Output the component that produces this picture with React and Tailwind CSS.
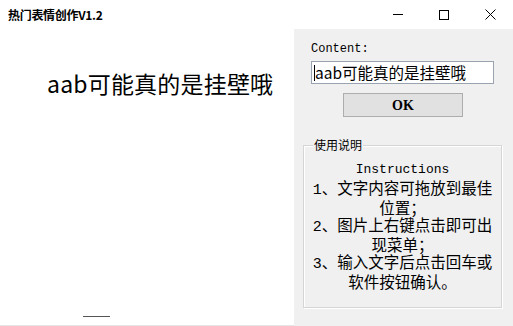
import React from "react";

const cjk = { fontFamily: '"Noto Sans CJK SC", "Noto Sans", sans-serif' };
const mono = { fontFamily: '"Liberation Mono", "Noto Sans CJK SC", monospace' };

const Lat = ({ children, size = "text-[13px]" }) => (
  <span className={size} style={{ fontFamily: '"Liberation Mono", monospace' }}>
    {children}
  </span>
);

const App = () => {
  return (
    <div className="w-[513px] h-[326px] bg-white flex flex-col overflow-hidden text-black" style={cjk}>
      {/* title bar */}
      <div className="h-[29px] flex items-center shrink-0">
        <div className="pl-[8px] text-[12px] font-bold tracking-[-0.3px]">热门表情创作V1.2</div>
        <div className="ml-auto flex items-center h-full">
          <div className="w-[46px] h-full flex items-center justify-center">
            <div className="w-[10px] h-px bg-black" />
          </div>
          <div className="w-[46px] h-full flex items-center justify-center">
            <div className="w-[10px] h-[10px] border border-black" />
          </div>
          <div className="w-[46px] h-full flex items-center justify-center">
            <svg width="11" height="11" viewBox="0 0 11 11">
              <path d="M0.5 0.5 L10.5 10.5 M10.5 0.5 L0.5 10.5" stroke="black" strokeWidth="1" />
            </svg>
          </div>
        </div>
      </div>

      <div className="flex flex-1">
        {/* canvas */}
        <div className="w-[294px] flex flex-col border-b border-[#e4e4e4]">
          <div className="pl-[47px] pt-[39px] text-[23px] leading-[30px] tracking-[0.2px]">aab可能真的是挂壁哦</div>
          <div className="mt-auto mb-[8px] ml-[83px] w-[27px] h-px bg-[#555]" />
        </div>

        {/* side panel */}
        <div className="flex-1 bg-[#f0f0f0] pl-[9px] flex flex-col">
          <div className="ml-[8px] mt-[12px] text-[12px] leading-[16px]" style={mono}>Content:</div>
          <div className="ml-[8px] mt-[4px] w-[183px] h-[23px] bg-white border border-[#9aa3b0] flex items-center pl-[2px]">
            <div className="w-px h-[16px] bg-black" />
            <span className="text-[15.5px] leading-none">aab可能真的是挂壁哦</span>
          </div>
          <div className="ml-[40px] mt-[9px] w-[120px] h-[24px] bg-[#e1e1e1] border border-[#adadad] flex items-center justify-center">
            <span className="text-[14px] font-bold" style={{ fontFamily: '"Liberation Serif", serif' }}>OK</span>
          </div>

          <div className="relative mt-[28px] w-[199px] h-[163px] border border-[#d5d5d5] shadow-[inset_1px_1px_0_#ffffff,1px_1px_0_#ffffff]">
            <div className="absolute left-[9px] top-[-9px] px-px bg-[#f0f0f0] text-[12px] leading-[16px]">使用说明</div>
            <div className="pt-[12px] text-center text-[15.5px] leading-[16.5px]">
              <div><Lat>Instructions</Lat></div>
              <div><Lat size="text-[15px]">1</Lat>、文字内容可拖放到最佳</div>
              <div>位置；</div>
              <div><Lat size="text-[15px]">2</Lat>、图片上右键点击即可出</div>
              <div>现菜单；</div>
              <div><Lat size="text-[15px]">3</Lat>、输入文字后点击回车或</div>
              <div>软件按钮确认。</div>
            </div>
          </div>
        </div>
      </div>
    </div>
  );
};

export default App;
